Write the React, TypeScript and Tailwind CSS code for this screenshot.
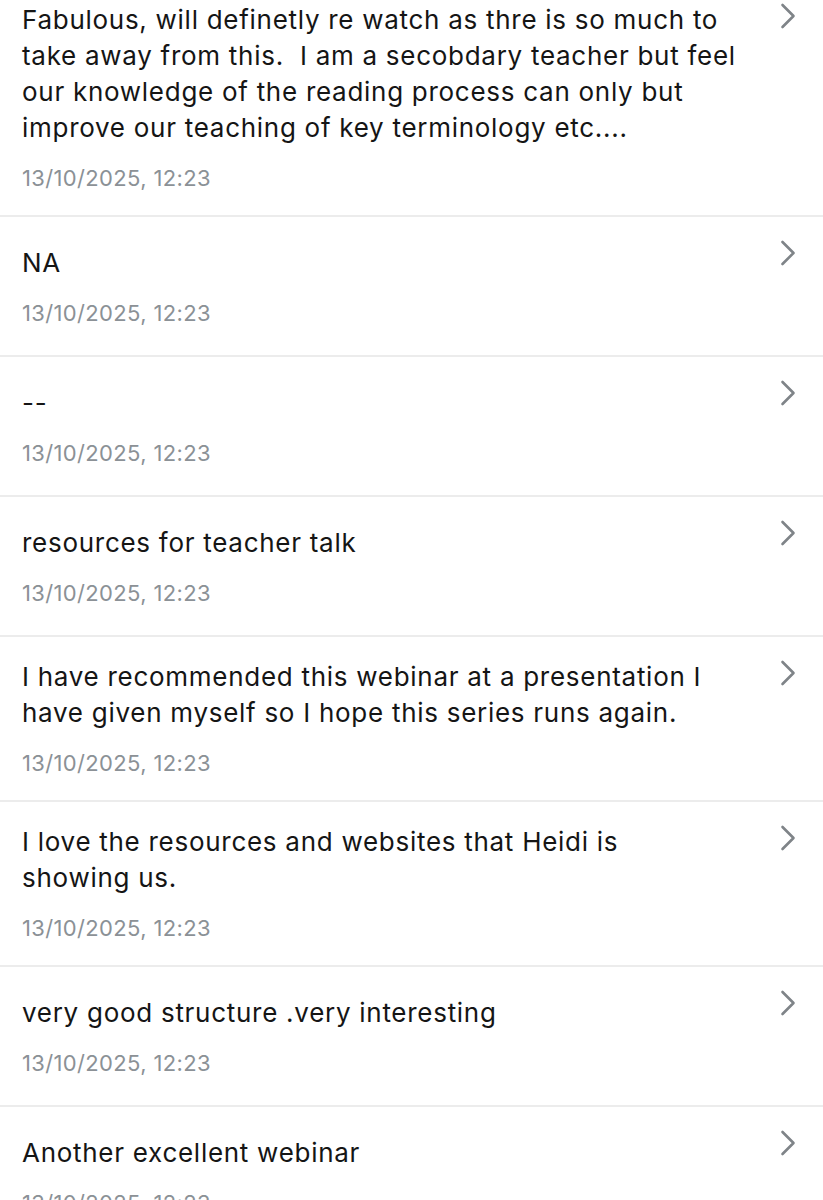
interface Response {
  text: string;
  date: string;
}

const responses: Response[] = [
  {
    text: 'Fabulous, will definetly re watch as thre is so much to\ntake away from this.  I am a secobdary teacher but feel\nour knowledge of the reading process can only but\nimprove our teaching of key terminology etc....',
    date: '13/10/2025, 12:23',
  },
  { text: 'NA', date: '13/10/2025, 12:23' },
  { text: '--', date: '13/10/2025, 12:23' },
  { text: 'resources for teacher talk', date: '13/10/2025, 12:23' },
  {
    text: 'I have recommended this webinar at a presentation I\nhave given myself so I hope this series runs again.',
    date: '13/10/2025, 12:23',
  },
  {
    text: 'I love the resources and websites that Heidi is\nshowing us.',
    date: '13/10/2025, 12:23',
  },
  { text: 'very good structure .very interesting', date: '13/10/2025, 12:23' },
  { text: 'Another excellent webinar', date: '13/10/2025, 12:23' },
];

function Chevron() {
  return (
    <svg width="16" height="26" viewBox="0 0 16 26" fill="none" className="mt-[23px] shrink-0">
      <polyline points="2.5,2 13.5,13 2.5,24" stroke="#7f8488" strokeWidth="2.6" strokeLinecap="round" strokeLinejoin="round" />
    </svg>
  );
}

function ResponseRow({ r }: { r: Response }) {
  return (
    <li className="flex items-start border-b-2 border-[#ececec] pl-[22px] pr-[27px]">
      <div className="flex min-h-[138px] flex-1 flex-col justify-center pt-[22px] pb-[23px]">
        <p className="whitespace-pre-wrap text-[26px] leading-[36px] tracking-[0.72px] text-[#151515]">{r.text}</p>
        <p className="mt-[18px] text-[22px] leading-[28px] tracking-[0.35px] text-[#8b9196]">{r.date}</p>
      </div>
      <Chevron />
    </li>
  );
}

export default function App() {
  return (
    <div className="h-[1200px] overflow-hidden bg-white font-['Inter',sans-serif]">
      <ul className="-mt-[20px]">
        {responses.map((r, i) => (
          <ResponseRow key={i} r={r} />
        ))}
      </ul>
    </div>
  );
}
